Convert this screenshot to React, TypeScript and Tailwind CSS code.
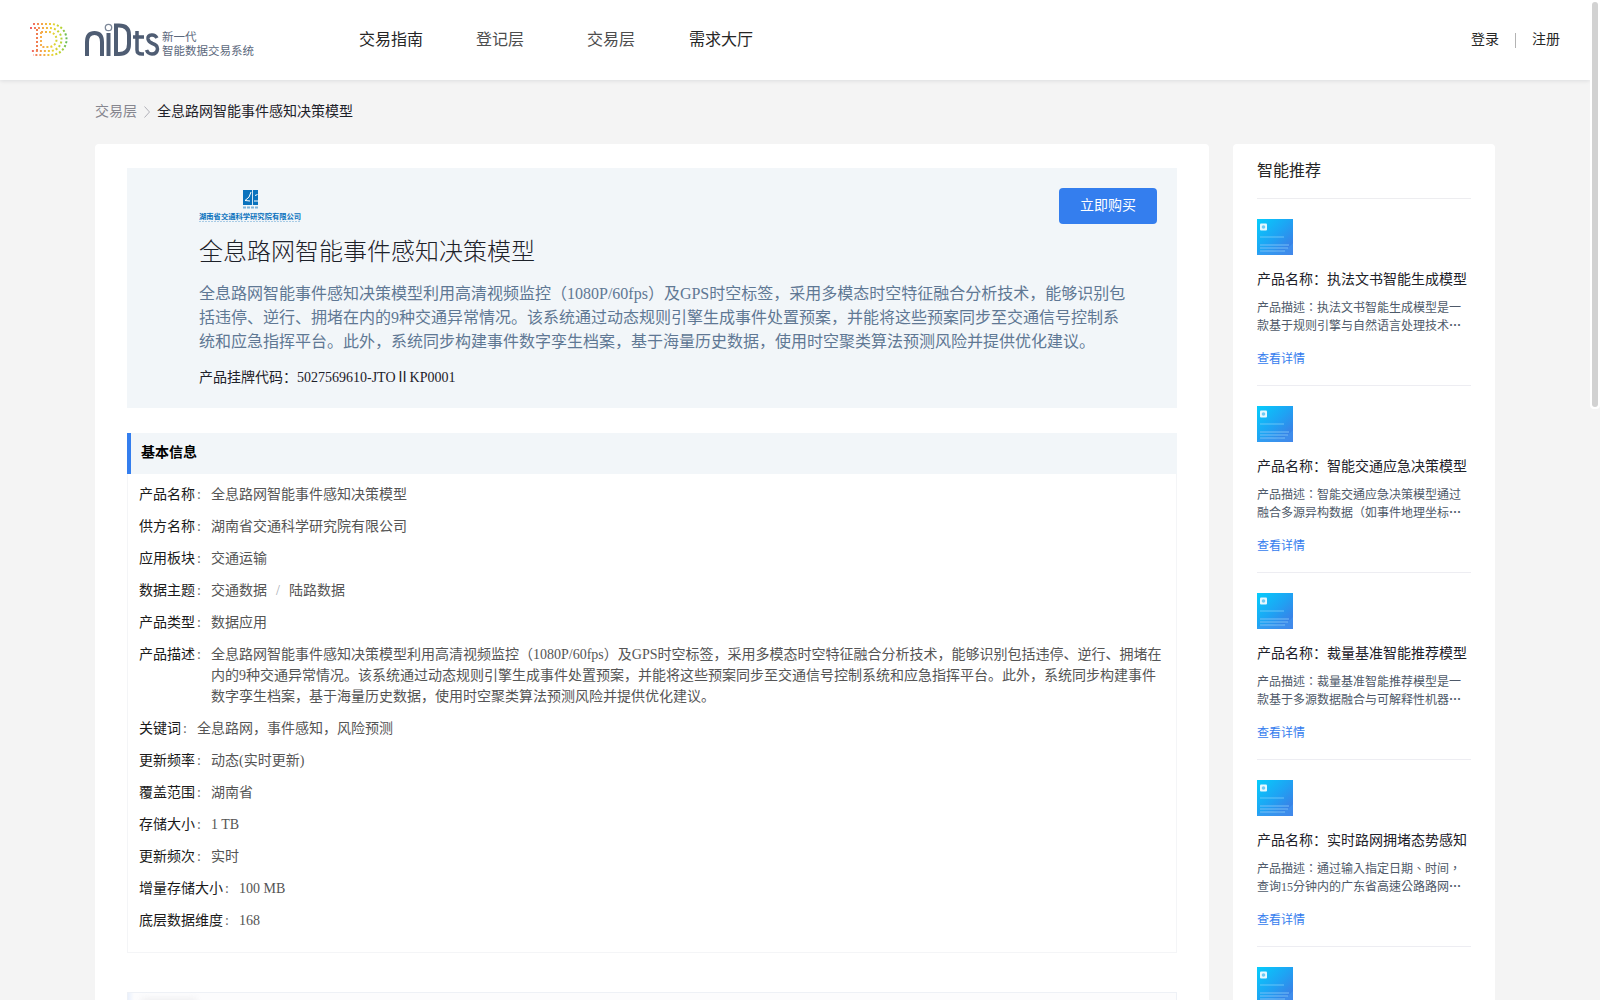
import React from "react";

interface InfoRow {
  label: string;
  value: React.ReactNode;
}

interface Product {
  name: string;
  desc: string;
}

const description =
  "全息路网智能事件感知决策模型利用高清视频监控（1080P/60fps）及GPS时空标签，采用多模态时空特征融合分析技术，能够识别包括违停、逆行、拥堵在内的9种交通异常情况。该系统通过动态规则引擎生成事件处置预案，并能将这些预案同步至交通信号控制系统和应急指挥平台。此外，系统同步构建事件数字孪生档案，基于海量历史数据，使用时空聚类算法预测风险并提供优化建议。";

const rows: InfoRow[] = [
  { label: "产品名称", value: "全息路网智能事件感知决策模型" },
  { label: "供方名称", value: "湖南省交通科学研究院有限公司" },
  { label: "应用板块", value: "交通运输" },
  {
    label: "数据主题",
    value: (
      <>
        交通数据<span className="mx-[9px] text-[#a8abb2]">/</span>陆路数据
      </>
    ),
  },
  { label: "产品类型", value: "数据应用" },
  { label: "产品描述", value: description },
  { label: "关键词", value: "全息路网，事件感知，风险预测" },
  { label: "更新频率", value: "动态(实时更新)" },
  { label: "覆盖范围", value: "湖南省" },
  { label: "存储大小", value: "1 TB" },
  { label: "更新频次", value: "实时" },
  { label: "增量存储大小", value: "100 MB" },
  { label: "底层数据维度", value: "168" },
];

const products: Product[] = [
  { name: "执法文书智能生成模型", desc: "执法文书智能生成模型是一款基于规则引擎与自然语言处理技术" },
  { name: "智能交通应急决策模型", desc: "智能交通应急决策模型通过融合多源异构数据（如事件地理坐标" },
  { name: "裁量基准智能推荐模型", desc: "裁量基准智能推荐模型是一款基于多源数据融合与可解释性机器" },
  { name: "实时路网拥堵态势感知", desc: "通过输入指定日期、时间，查询15分钟内的广东省高速公路路网" },
];

const Logo: React.FC = () => (
  <svg viewBox="0 0 230 40" className="h-10 w-[230px]" role="img" aria-label="niDts">
    <defs>
      <linearGradient id="dots" gradientUnits="userSpaceOnUse" x1="0" x2="37" y1="0" y2="0">
        <stop offset="0" stopColor="#ee5a6a" />
        <stop offset="0.3" stopColor="#f6a04d" />
        <stop offset="0.6" stopColor="#ecd232" />
        <stop offset="0.85" stopColor="#b5d334" />
        <stop offset="1" stopColor="#5cb85c" />
      </linearGradient>
    </defs>
    <g fill="none" stroke="url(#dots)" strokeWidth="2" strokeDasharray="2 2">
      <path d="M3 4H21A15.500 15.500 0 0 1 21 35H3" />
      <path d="M0 8H20A11.500 11.500 0 0 1 20 31H0" />
      <path d="M11 12H19A7.500 7.500 0 0 1 19 27H11" />
      <path d="M7 9V31" stroke="#f07c50" />
      <path d="M11 12V28" stroke="#f6ae4d" />
    </g>
    <g fill="none" stroke="#4f5d73" strokeWidth="4">
      <path d="M57 36V22Q57 13 64.500 13Q72 13 72 22V36" />
      <path d="M78.500 13V36" />
      <circle cx="78.500" cy="7.500" r="3.200" strokeWidth="1.300" stroke="#7d8899" />
      <path d="M86 5.500H89Q99 5.500 99 15V24Q99 34 89 34H86Z" />
      <path d="M107 11V30Q107 34 112 34H114M103 17H114" strokeWidth="3.500" />
      <path
        d="M127 18Q125 14.500 121.500 15Q117.500 15.500 118 19Q118.500 22 122.500 23.500Q127.500 25 127.500 29Q127 34 122 34Q118 34 116.500 30"
        strokeWidth="3.500"
      />
    </g>
    <text x="132" y="21" fontSize="11.500" fill="#5b687c" fontFamily="Noto Sans CJK SC">
      新一代
    </text>
    <text x="132" y="35" fontSize="11.500" fill="#5b687c" fontFamily="Noto Sans CJK SC">
      智能数据交易系统
    </text>
  </svg>
);

const CompanyLogo: React.FC = () => (
  <svg viewBox="0 0 104 34" className="h-[34px] w-[104px]" role="img" aria-label="湖南省交通科学研究院有限公司">
    <rect x="44" y="0" width="15" height="15" fill="#0a72bd" />
    <path d="M53.500 0V15" stroke="#d5e6f3" strokeWidth="1" />
    <path d="M52 2Q51 8 46 10.500L51 11M56 5.500L58.500 4.500M55 11H59" stroke="#fff" strokeWidth="1" fill="none" />
    <path d="M44 17.500H59" stroke="#7fb3da" strokeWidth="2" strokeDasharray="3 1" />
    <text x="0" y="29" fontSize="7.300" fontWeight="700" fill="#0a72bd" fontFamily="Noto Sans CJK SC">
      湖南省交通科学研究院有限公司
    </text>
    <path d="M0 31.500H102" stroke="#a9cce6" strokeWidth="1" strokeDasharray="2 1" />
  </svg>
);

const Thumb: React.FC = () => (
  <svg viewBox="0 0 36 36" className="block size-9" aria-hidden="true">
    <defs>
      <linearGradient id="cover" x1="0" y1="0" x2="1" y2="1">
        <stop offset="0" stopColor="#05cdfc" />
        <stop offset="0.5" stopColor="#1fa2f3" />
        <stop offset="1" stopColor="#4671e0" />
      </linearGradient>
    </defs>
    <rect width="36" height="36" fill="url(#cover)" />
    <path d="M0 34Q10 29 18 32T36 24V36H0Z" fill="#3f9cf2" opacity="0.5" />
    <rect x="3" y="4.500" width="7" height="7" rx="1" fill="#e6f8ff" />
    <circle cx="6.500" cy="8" r="1.800" fill="#6fcbf3" />
    <path d="M3 18H27" stroke="#7fd0f8" strokeWidth="1.500" opacity="0.5" />
    <path d="M3 26H32M3 29H31M3 32H28" stroke="#7fc4f8" strokeWidth="1.800" opacity="0.45" />
  </svg>
);

const Header: React.FC = () => (
  <header className="relative flex h-20 items-center bg-white px-[30px] shadow-[0_1px_4px_rgba(0,21,41,0.1)]">
    <Logo />
    <nav className="ml-[99px] flex text-base text-[#4d4d4d]">
      <a href="#guide" className="w-[117px] text-[#262626]">交易指南</a>
      <a href="#register" className="w-[111px]">登记层</a>
      <a href="#trade" className="w-[102px]">交易层</a>
      <a href="#demand" className="text-[#262626]">需求大厅</a>
    </nav>
    <div className="ml-auto flex items-center text-sm text-[#262626]">
      <a href="#login">登录</a>
      <span className="mx-4 h-[15px] w-px bg-[#b3b3b3]" />
      <a href="#signup">注册</a>
    </div>
  </header>
);

const ProductCard: React.FC<Product> = ({ name, desc }) => (
  <li className="border-b border-[#ededf2] pt-5 pb-[17px]">
    <Thumb />
    <h3 className="mt-4 text-sm leading-[18px] whitespace-nowrap text-[#1d2129]">{`产品名称：${name}`}</h3>
    <p className="mt-[10px] mr-2 font-['Liberation_Serif','Noto_Sans_CJK_TC',sans-serif] text-xs leading-[18px] text-[#4e5969]">
      {`产品描述：${desc}`}
      <span className="font-['Noto_Sans_CJK_TC',sans-serif] leading-none font-bold">…</span>
    </p>
    <a href="#detail" className="mt-[15px] block text-xs leading-[18px] text-[#347cee]">
      查看详情
    </a>
  </li>
);

const App: React.FC = () => {
  return (
    <div className="relative h-screen overflow-hidden bg-[#f4f4f4] pr-[10px] font-['Liberation_Serif','Noto_Sans_CJK_SC',sans-serif]">
      <Header />
      <div className="mx-auto max-w-[1400px]">
        <nav className="flex h-16 items-center text-sm text-[#86868f]">
          <a href="#trade">交易层</a>
          <svg viewBox="0 0 6 12" className="mx-[7px] h-3 w-[6px]" fill="none" stroke="#b0b0b8" aria-hidden="true">
            <path d="M0.500 0.500L5.500 6L0.500 11.500" />
          </svg>
          <span className="text-[#1d2129]">全息路网智能事件感知决策模型</span>
        </nav>

        <div className="flex items-start gap-6">
          <main className="min-w-0 flex-1 rounded bg-white px-8 py-6">
            <section className="relative bg-[#f2f6f9] pt-[22px] pr-12 pb-[18px] pl-[72px]">
              <button className="absolute top-5 right-5 h-9 w-[98px] rounded bg-[#347eee] text-sm text-white">
                立即购买
              </button>
              <CompanyLogo />
              <h1 className="mt-2 text-2xl leading-10 font-light text-[#1d2129]">
                全息路网智能事件感知决策模型
              </h1>
              <p className="mt-[10px] text-base leading-6 text-[#5f7894]">{description}</p>
              <p className="mt-3 text-sm leading-6 text-[#1d2129]">
                产品挂牌代码：5027569610-JTOⅡKP0001
              </p>
            </section>

            <section className="mt-[25px] border border-t-0 border-[#f4f5f7] pb-[15px]">
              <h2 className="-mx-px border-l-4 border-[#347eee] bg-[#f2f6f9] pb-px pl-[10px] text-sm leading-10 font-bold text-black">
                基本信息
              </h2>
              <dl className="pt-[5px]">
                {rows.map((row) => (
                  <div key={row.label} className="flex px-[11px] pt-[5px] pb-[6px] text-sm leading-[21px]">
                    <dt className="shrink-0 text-[#1a1a1a]">{row.label}</dt>
                    <dd className="w-4 shrink-0 pl-[2px] text-[#666]">:</dd>
                    <dd className="text-[#555]">{row.value}</dd>
                  </div>
                ))}
              </dl>
            </section>

            <section className="mt-[39px] h-40 border border-[#eef1f6] bg-[#fcfcfd]">
              <div className="flex items-start gap-2">
                <div className="h-10 w-[6px] bg-linear-to-r from-[#e9f0fc] to-[#fcfcfd]" />
                <div className="mt-[6px] h-4 w-[54px] bg-[#ececee] blur-[3px]" />
              </div>
            </section>
          </main>

          <aside className="w-[262px] shrink-0 rounded bg-white px-6">
            <h2 className="border-b border-[#ededf0] text-base leading-[54px] text-[#262626]">
              智能推荐
            </h2>
            <ul>
              {products.map((product) => (
                <ProductCard key={product.name} {...product} />
              ))}
              <li className="h-[187px] pt-5">
                <Thumb />
              </li>
            </ul>
          </aside>
        </div>
      </div>

      {/* scroll bar */}
      <div className="absolute top-0 right-0 h-[409px] w-[10px] rounded-b bg-white p-[2px]">
        <div className="h-full rounded-full bg-[#d2d2d2]" />
      </div>
    </div>
  );
};

export default App;
